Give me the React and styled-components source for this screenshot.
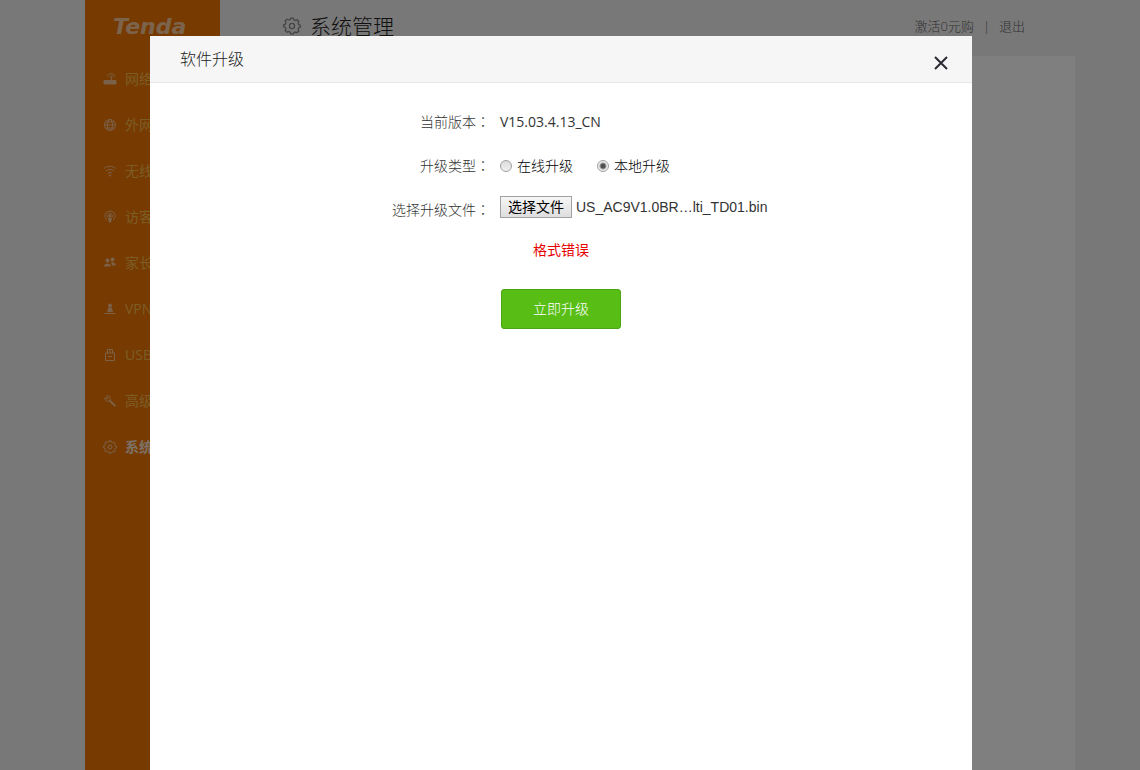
import React, { useRef, useState } from "react";
import styled, { createGlobalStyle } from "styled-components";

const GlobalStyle = createGlobalStyle`
  * { box-sizing: border-box; }
  html, body { margin: 0; }
  body {
    background: #f1f1f1;
    color: #333;
    font: 300 14px/20px "Open Sans", "Noto Sans CJK SC", sans-serif;
    overflow: hidden;
  }
  a { color: inherit; text-decoration: none; }
  button { font: inherit; cursor: pointer; }
`;

const Shell = styled.div`
  display: flex;
  min-height: 100vh;
  padding: 0 65px 0 85px;
`;

const Sidebar = styled.aside`
  flex: 0 0 135px;
  background: #ee7400;
`;

const Logo = styled.div`
  height: 56px;
  padding: 14px 0 0 28px;
  color: #fff;
  font: italic bold 22px/26px "DejaVu Sans", sans-serif;
  opacity: 0.6;
`;

const NavList = styled.ul`
  list-style: none;
  margin: 0;
  padding: 0;
`;

const NavLink = styled.a`
  display: flex;
  align-items: center;
  gap: 8px;
  height: 46px;
  padding-left: 18px;
  white-space: nowrap;
  color: ${(p) => (p.$active ? "#fff" : "#ffd870")};
  font-weight: ${(p) => (p.$active ? 700 : 400)};
  opacity: ${(p) => (p.$active ? 0.8 : 0.7)};

  svg { color: #fff; flex: none; opacity: 0.8; }
`;

const Main = styled.main`
  flex: 1;
  display: flex;
  flex-direction: column;
`;

const TopBar = styled.header`
  display: flex;
  align-items: center;
  justify-content: space-between;
  height: 56px;
  padding: 0 50px 4px 63px;
`;

const PageTitle = styled.h1`
  display: flex;
  align-items: center;
  gap: 9px;
  margin: 0;
  color: #222;
  font-size: 21px;
  line-height: 30px;
  font-weight: 300;

  svg { color: #888; }
`;

const TopLinks = styled.nav`
  display: flex;
  gap: 9px;
  font-size: 13px;
  color: #666;
`;

const Content = styled.section`
  flex: 1;
  background: #fff;
`;

const Overlay = styled.div`
  position: fixed;
  inset: 0;
  display: flex;
  padding: 36px 168px 0 150px;
  background: rgba(0, 0, 0, 0.5);
`;

const Dialog = styled.section`
  flex: 1;
  background: #fff;
`;

const DialogHeader = styled.header`
  display: flex;
  align-items: center;
  justify-content: space-between;
  height: 47px;
  padding: 0 22px 0 30px;
  background: #f6f6f6;
  border-bottom: 1px solid #e8e8e8;
`;

const DialogTitle = styled.h2`
  margin: 0;
  color: #222;
  font-size: 16px;
  line-height: 24px;
  font-weight: inherit;
`;

const CloseButton = styled.button`
  display: flex;
  margin-top: 8px;
  padding: 0;
  border: 0;
  background: none;
  color: #2b2b33;
`;

const Form = styled.form`
  display: flex;
  flex-direction: column;
  padding-top: 17px;
`;

const Row = styled.div`
  display: flex;
  align-items: center;
  height: 44px;
`;

const RowLabel = styled.span`
  width: 340px;
  text-align: right;
  color: #333;
`;

const Colon = styled.span`
  font-family: "Noto Sans CJK TC", sans-serif;
  line-height: 1px;
`;

const RowValue = styled.div`
  display: flex;
  align-items: center;
  gap: ${(p) => p.$gap || 0}px;
  padding-left: 10px;
  padding-bottom: ${(p) => (p.$raised ? 6 : 0)}px;
`;

const VersionText = styled.span`
  font-weight: 400;
`;

const Choice = styled.label`
  display: flex;
  align-items: center;
  gap: 5px;
  color: #000;
`;

const Radio = styled.input`
  appearance: none;
  width: 12px;
  height: 12px;
  margin: 0;
  border: 1px solid #a0a0a0;
  border-radius: 50%;
  background: linear-gradient(#dcdcdc, #f0f0f0);

  &:checked {
    background: radial-gradient(circle, #505050 0 2px, #ececec 4px);
  }
`;

const FileButton = styled.button`
  height: 22px;
  padding: 0 7px;
  border: 1px solid #a2a2a2;
  border-radius: 0;
  background: linear-gradient(#f6f6f6, #dedede);
  color: #000;
  font-weight: 400;
  line-height: 20px;
`;

const FileName = styled.span`
  font-family: "Liberation Sans", sans-serif;
`;

const ErrorText = styled.p`
  margin: 8px 0 0;
  text-align: center;
  color: #e60000;
  font-weight: 400;
`;

const SubmitButton = styled.button`
  align-self: center;
  width: 120px;
  height: 40px;
  margin-top: 29px;
  border: 1px solid #4aa512;
  border-radius: 3px;
  background: #58be16;
  color: #fff;
`;

const Icon = ({ size = 14, children, box = 14 }) => (
  <svg
    width={size}
    height={size}
    viewBox={`0 0 ${box} ${box}`}
    fill="none"
    stroke="currentColor"
    strokeWidth="1"
    aria-hidden="true"
  >
    {children}
  </svg>
);

const gear = (
  <>
    <path d="M5.6 2.1 6 .9h2l.4 1.2 1.3.6 1.2-.6 1.4 1.4-.6 1.2.5 1.3 1.2.4v1.6l-1.2.4-.5 1.3.6 1.2-1.4 1.4-1.2-.6-1.3.6L8 13.1H6l-.4-1.2-1.3-.6-1.2.6-1.4-1.4.6-1.2-.5-1.3-1.2-.4V6l1.2-.4.5-1.3-.6-1.2 1.4-1.4 1.2.6z" />
    <circle cx="7" cy="7" r="2" />
  </>
);

const icons = {
  router: (
    <>
      <path d="M1 8.5h12V12H1z" fill="currentColor" />
      <path d="M8.5 8V5M4.500 4.500C5 .8 11.500.8 12 4.500M6.500 5.500c.5-2 3.500-2 4 0" />
    </>
  ),
  globe: (
    <>
      <circle cx="7" cy="7" r="5.5" />
      <ellipse cx="7" cy="7" rx="2.5" ry="5.5" />
      <path d="M1.5 7h11M2.5 4h9M2.5 10h9" />
    </>
  ),
  wifi: (
    <>
      <path d="M1 4.5c3.5-3 8.5-3 12 0M3 7c2.5-2 5.5-2 8 0M5 9.3c1.2-1 2.8-1 4 0" />
      <circle cx="7" cy="11.5" r="1" fill="currentColor" stroke="none" />
    </>
  ),
  guest: (
    <>
      <path d="M4 10a5 5 0 1 1 6 0M5 7.5a2.5 2.5 0 1 1 4 0" />
      <circle cx="7" cy="6" r="1.5" fill="currentColor" stroke="none" />
      <path d="M5 8h4l-1 4.5H6z" fill="currentColor" stroke="none" />
    </>
  ),
  family: (
    <g fill="currentColor" stroke="none">
      <circle cx="4.5" cy="4.5" r="2" />
      <circle cx="9.5" cy="3.5" r="2" />
      <path d="M1 10.5c0-4 6.5-4 7 0zM8 6.5c2-1 4.5 0 5 3H9z" />
    </g>
  ),
  vpn: (
    <>
      <circle cx="7" cy="3.5" r="2" fill="currentColor" stroke="none" />
      <path d="M5.5 5.5h3L10 10H4z" fill="currentColor" stroke="none" />
      <path d="M1.5 11.5h11" />
    </>
  ),
  usb: <path d="M4.5 5V1.5h5V5M2.5 5h9v7.5h-9zM6 3h2M5 8.5h4" />,
  wrench: (
    <>
      <path d="M2 3.5 4 5l1-1-1.5-2c2.5-.8 4.5 1 3.5 3.5C6 8 3 7.5 2 5.5z" />
      <path d="m6.5 6.5 6 5.5" strokeWidth="2" />
    </>
  ),
  gear,
};

const navItems = [
  ["router", "网络状态"],
  ["globe", "外网设置"],
  ["wifi", "无线设置"],
  ["guest", "访客网络"],
  ["family", "家长控制"],
  ["vpn", "VPN"],
  ["usb", "USB"],
  ["wrench", "高级功能"],
  ["gear", "系统管理"],
];

const upgradeTypes = [
  ["online", "在线升级"],
  ["local", "本地升级"],
];

export default function App() {
  const fileInput = useRef(null);
  const [type, setType] = useState("local");
  const [fileName, setFileName] = useState("US_AC9V1.0BR…lti_TD01.bin");

  const handleFile = (e) => {
    if (e.target.files[0]) setFileName(e.target.files[0].name);
  };

  return (
    <>
      <GlobalStyle />
      <Shell>
        <Sidebar>
          <Logo>Tenda</Logo>
          <NavList>
            {navItems.map(([icon, label]) => (
              <li key={icon}>
                <NavLink href="#" $active={icon === "gear"}>
                  <Icon>{icons[icon]}</Icon>
                  {label}
                </NavLink>
              </li>
            ))}
          </NavList>
        </Sidebar>
        <Main>
          <TopBar>
            <PageTitle>
              <Icon size={18}>{gear}</Icon>
              系统管理
            </PageTitle>
            <TopLinks>
              <a href="#">激活0元购</a>
              <span>|</span>
              <a href="#">退出</a>
            </TopLinks>
          </TopBar>
          <Content />
        </Main>
      </Shell>
      <Overlay>
        <Dialog role="dialog" aria-modal="true" aria-labelledby="dialog-title">
          <DialogHeader>
            <DialogTitle id="dialog-title">软件升级</DialogTitle>
            <CloseButton type="button" aria-label="关闭">
              <Icon size={18} box={18}>
                <path d="m3 3 12 12M15 3 3 15" strokeWidth="2" />
              </Icon>
            </CloseButton>
          </DialogHeader>
          <Form onSubmit={(e) => e.preventDefault()}>
            <Row>
              <RowLabel>当前版本<Colon>：</Colon></RowLabel>
              <RowValue>
                <VersionText>V15.03.4.13_CN</VersionText>
              </RowValue>
            </Row>
            <Row role="radiogroup" aria-labelledby="type-label">
              <RowLabel id="type-label">升级类型<Colon>：</Colon></RowLabel>
              <RowValue $gap={24}>
                {upgradeTypes.map(([value, label]) => (
                  <Choice key={value}>
                    <Radio
                      type="radio"
                      name="type"
                      value={value}
                      checked={type === value}
                      onChange={() => setType(value)}
                    />
                    {label}
                  </Choice>
                ))}
              </RowValue>
            </Row>
            <Row>
              <RowLabel as="label" htmlFor="firmware">
                选择升级文件<Colon>：</Colon>
              </RowLabel>
              <RowValue $gap={4} $raised>
                <FileButton type="button" onClick={() => fileInput.current.click()}>
                  选择文件
                </FileButton>
                <input id="firmware" ref={fileInput} type="file" hidden onChange={handleFile} />
                <FileName>{fileName}</FileName>
              </RowValue>
            </Row>
            <ErrorText role="alert">格式错误</ErrorText>
            <SubmitButton type="submit">立即升级</SubmitButton>
          </Form>
        </Dialog>
      </Overlay>
    </>
  );
}
